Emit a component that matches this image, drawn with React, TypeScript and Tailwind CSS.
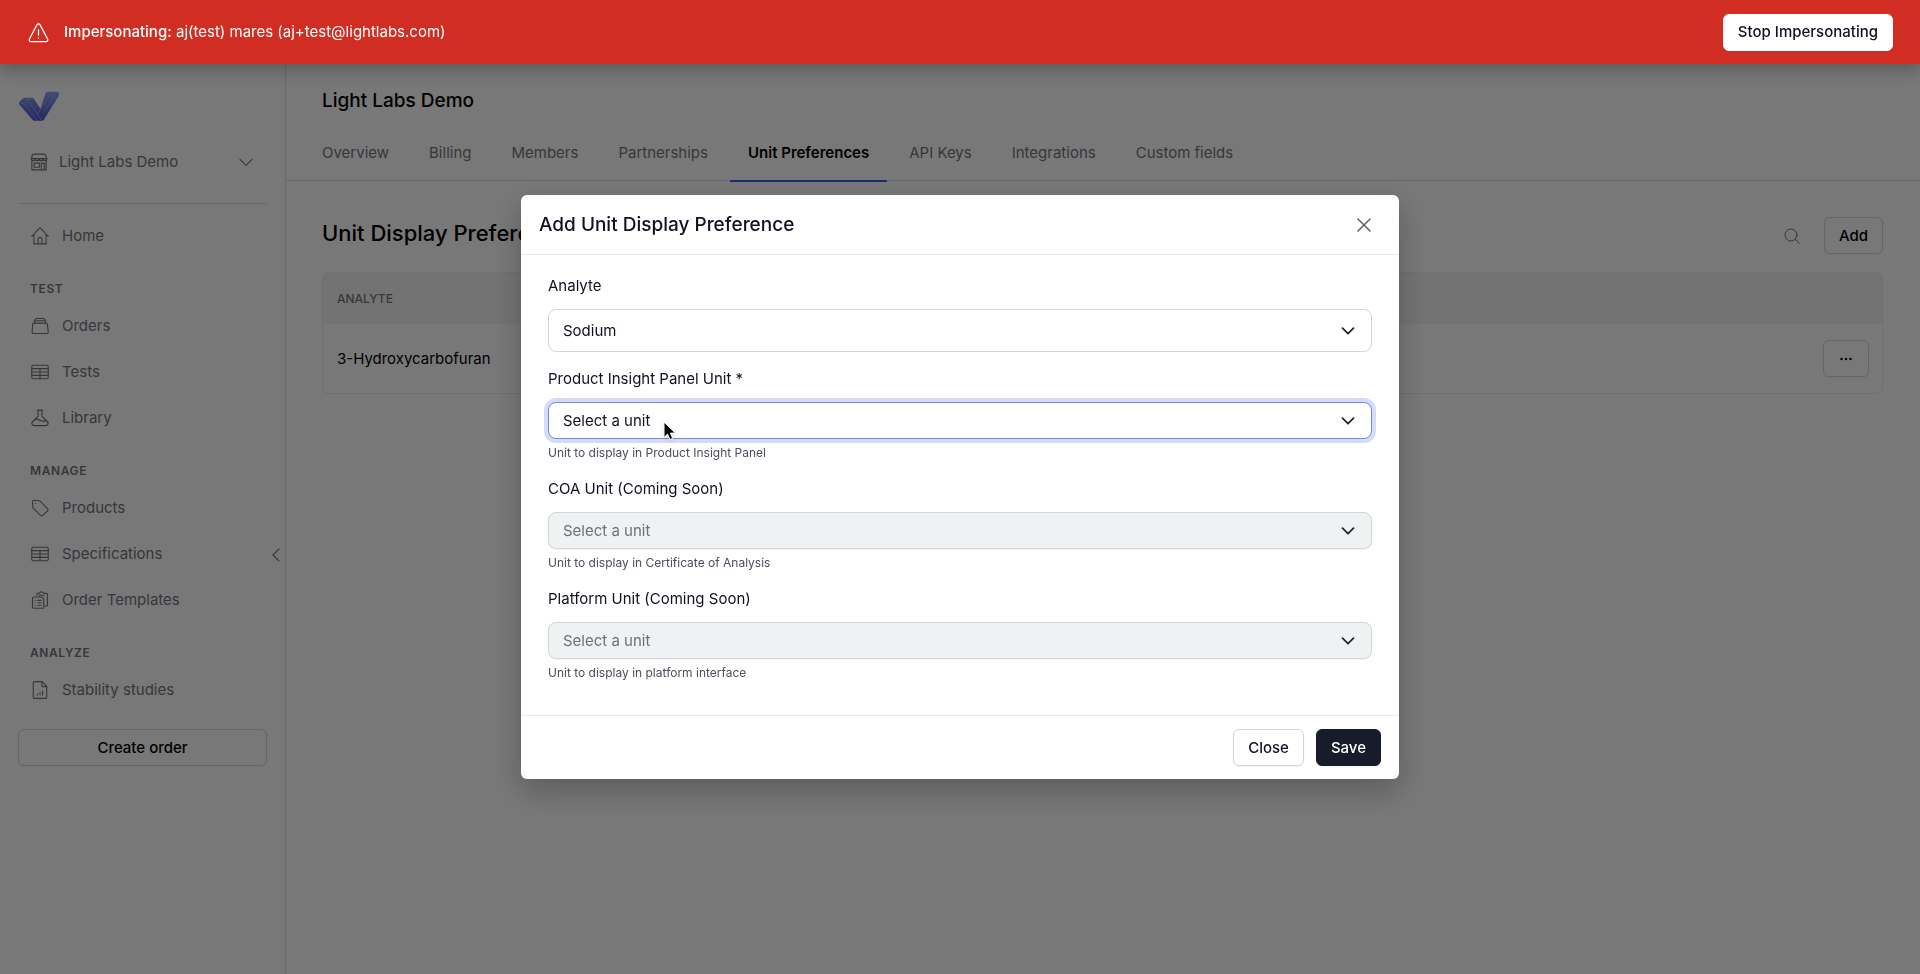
import { useState } from "react";
import type { ReactNode } from "react";
import { clsx } from "clsx";

type IconProps = { className?: string; children?: ReactNode };

function Icon({ className, children }: IconProps) {
  return (
    <svg
      viewBox="0 0 24 24"
      fill="none"
      stroke="currentColor"
      strokeWidth="1.5"
      strokeLinecap="round"
      strokeLinejoin="round"
      aria-hidden="true"
      className={clsx("shrink-0", className ?? "size-[18px]")}
    >
      {children}
    </svg>
  );
}

const StoreIcon = () => (
  <Icon>
    <path d="M2.500 7.500V5a3.500 3.500 0 0 1 3.500-3.500h12A3.500 3.500 0 0 1 21.500 5v2.500M1.500 7.500h21M1.500 7.500a2.600 2.600 0 0 0 5.200 0 2.600 2.600 0 0 0 5.300 0 2.600 2.600 0 0 0 5.300 0 2.600 2.600 0 0 0 5.200 0M2.500 10.500v12h19v-12M5.500 13.500h7v5.500h-7zM15 22.500v-9h4v9" />
  </Icon>
);

const HomeIcon = () => (
  <Icon>
    <path d="M.8 12.700 10.900 1.900a1.500 1.500 0 0 1 2.200 0l10.100 10.800M3.800 9.800v12.700h16.400V9.800M9.300 22.500v-6a2.700 2.700 0 0 1 5.400 0v6" />
  </Icon>
);

const OrdersIcon = () => (
  <Icon>
    <path d="M4 8.200h16c1 0 1.700.700 1.800 1.700L23 19.800a2 2 0 0 1-2 2.200H3.500a2 2 0 0 1-2-2.200l.700-9.900c.1-1 .8-1.700 1.800-1.700zM4.500 5h15M6.500 2h11M4.500 8.200V5l2-3M19.500 8.200V5l-2-3" />
  </Icon>
);

const TableIcon = () => (
  <Icon>
    <rect x="1" y="3" width="22" height="18" rx="2" />
    <path d="M1 7.500h22M1 12h22M1 16.500h22M12 7.500V21" />
  </Icon>
);

const FlaskIcon = () => (
  <Icon>
    <path d="M8.500 1.500h7M9.500 1.500v8L2.200 17c-2.200 2.300-.7 5.200 2.400 5.200h14.800c3.100 0 4.600-2.900 2.400-5.200L14.500 9.500v-8M5.500 14c3-.8 5 .2 7 1.200s4.500 1.300 7 .3" />
  </Icon>
);

const TagIcon = () => (
  <Icon>
    <path d="M2 3.500A1.800 1.800 0 0 1 3.800 1.700l7 .6c.7.1 1.300.4 1.800.9l9.300 9.500a2.200 2.200 0 0 1 0 3.100l-6.100 6a2.200 2.200 0 0 1-3.100 0L3.300 12.400a2.700 2.700 0 0 1-.8-1.700z" />
    <path d="M6 6h.1" />
  </Icon>
);

const ClipboardsIcon = () => (
  <Icon>
    <path d="M8 5.500V4.700A1.500 1.500 0 0 1 9.500 3.200H11a3.200 3.200 0 0 1 6 0h3.500A1.500 1.500 0 0 1 22 4.700v13.800a1.500 1.500 0 0 1-1.500 1.500H18M10.500 5.700h7" />
    <path d="M2 9.500A1.500 1.500 0 0 1 3.500 8h11L17 10.500v11a1.500 1.500 0 0 1-1.500 1.500h-12A1.500 1.500 0 0 1 2 21.500zM9 12.500h4.500M9 15.700h4.500M9 19h4.500M5.700 12.500h.1M5.700 15.700h.1M5.700 19h.1" />
  </Icon>
);

const ReportIcon = () => (
  <Icon>
    <path d="M3 2.500A1.700 1.700 0 0 1 4.700.8h10.100L21 7v14.500a1.700 1.700 0 0 1-1.700 1.700H4.700A1.700 1.700 0 0 1 3 21.500zM14.500 1v5a1.500 1.500 0 0 0 1.500 1.500h5M8.500 18.500v-1M12 18.500v-3M15.500 18.500v-5" />
  </Icon>
);

const ChevronDown = ({ className }: { className?: string }) => (
  <Icon className={className}>
    <path d="m4 8.500 8 8 8-8" />
  </Icon>
);

function Logo() {
  return (
    <svg viewBox="0 0 125 90" className="h-[30px] w-[42px]" aria-hidden="true">
      <defs>
        <linearGradient id="mark" x1="0" y1="0" x2="0" y2="1">
          <stop offset="0" stopColor="#8c9ff0" />
          <stop offset="1" stopColor="#4a58d4" />
        </linearGradient>
      </defs>
      <path
        d="M3 33 15 22q2-2 5-2h22q3 0 5 3l20 30L83 5q2-3 6-3h26q10 0 7 12L77 86q-2 3-5 3H48q-3 0-5-3L4 41q-3-4-1-8z"
        fill="url(#mark)"
      />
      <path
        d="M4 35 17 38 28 27l16-4M17 38l40 50M28 27l43 61M67 55 100 4M67 55l-7 12M76 64l38-58"
        fill="none"
        stroke="#c3cdfb"
        strokeWidth="2"
        opacity=".7"
      />
    </svg>
  );
}

type NavItem = { label: string; icon: ReactNode };

const sections: { title: string | null; items: NavItem[] }[] = [
  { title: null, items: [{ label: "Home", icon: <HomeIcon /> }] },
  {
    title: "Test",
    items: [
      { label: "Orders", icon: <OrdersIcon /> },
      { label: "Tests", icon: <TableIcon /> },
      { label: "Library", icon: <FlaskIcon /> },
    ],
  },
  {
    title: "Manage",
    items: [
      { label: "Products", icon: <TagIcon /> },
      { label: "Specifications", icon: <TableIcon /> },
      { label: "Order Templates", icon: <ClipboardsIcon /> },
    ],
  },
  { title: "Analyze", items: [{ label: "Stability studies", icon: <ReportIcon /> }] },
];

const tabs = [
  "Overview",
  "Billing",
  "Members",
  "Partnerships",
  "Unit Preferences",
  "API Keys",
  "Integrations",
  "Custom fields",
];

const buttonBase = "flex h-[37px] items-center justify-center rounded-md border px-[14px] font-medium shadow-xs";

function Banner() {
  return (
    <header className="relative z-30 flex h-16 items-center bg-[#d12d22] pr-[27px] pl-7 text-white shadow-[0_6px_16px_rgba(0,0,0,0.25)]">
      <Icon className="size-[21px]">
        <path d="M10.300 3.200 1.600 19.500A2 2 0 0 0 3.300 22.500h17.400a2 2 0 0 0 1.700-3L13.700 3.200a1.950 1.950 0 0 0-3.400 0zM12 9v6M12 18.300v.1" />
      </Icon>
      <p className="ml-[15px]">
        <strong className="font-medium">Impersonating:</strong> aj(test) mares (aj+test@lightlabs.com)
      </p>
      <button type="button" className={clsx(buttonBase, "ml-auto border-white bg-white text-[#0f1222]")}>
        Stop Impersonating
      </button>
    </header>
  );
}

function Sidebar() {
  return (
    <aside className="relative w-[286px] shrink-0 border-r border-[#e2e2e2] px-[18px] pt-[27px] text-[#74767e]">
      <Logo />
      <button type="button" className="mt-[18px] flex h-[46px] w-full items-center pr-3 pl-3">
        <StoreIcon />
        <span className="ml-[11px]">Light Labs Demo</span>
        <ChevronDown className="ml-auto size-[18px]" />
      </button>
      <div className="mt-[18px] mb-[9px] h-px bg-[#e2e2e2]" />
      <nav>
        {sections.map((section) => (
          <div key={section.title ?? "main"}>
            {section.title && (
              <h2 className="px-3 pt-[22px] pb-[6px] text-xs leading-4 font-semibold tracking-wider uppercase">
                {section.title}
              </h2>
            )}
            {section.items.map((item) => (
              <a key={item.label} href="#" className="flex h-[46px] items-center gap-[13px] pl-[13px]">
                {item.icon}
                {item.label}
              </a>
            ))}
          </div>
        ))}
      </nav>
      <button type="button" className={clsx(buttonBase, "mt-4 w-full border-[#d6d6d6] text-black")}>
        Create order
      </button>
      <button type="button" aria-label="Collapse sidebar" className="absolute top-[482px] right-0">
        <Icon className="size-[18px]">
          <path d="m16 4-8 8 8 8" />
        </Icon>
      </button>
    </aside>
  );
}

function Content() {
  return (
    <main className="min-w-0 flex-1">
      <div className="border-b border-[#e2e2e2] px-[18px] pt-[22px]">
        <h1 className="px-[18px] text-[19px] leading-[30px] font-medium">Light Labs Demo</h1>
        <nav className="mt-[9px] -mb-[2px] flex gap-1 text-[#74767e]">
          {tabs.map((tab) => (
            <a
              key={tab}
              href="#"
              className={clsx(
                "border-b-2 px-[18px] pt-4 pb-[15px]",
                tab === "Unit Preferences" ? "border-[#3560ee] font-semibold text-black" : "border-transparent"
              )}
            >
              {tab}
            </a>
          ))}
        </nav>
      </div>

      <section className="pr-[37px] pl-9">
        <div className="flex items-start pt-9 pb-[18px]">
          <h2 className="text-[22px] leading-8 font-medium">Unit Display Preferences</h2>
          <button type="button" aria-label="Search" className="mr-6 ml-auto self-center text-[#74767e]">
            <Icon className="size-[16px]">
              <circle cx="10.500" cy="10.500" r="9" />
              <path d="m17 17 6 6" />
            </Icon>
          </button>
          <button type="button" className={clsx(buttonBase, "border-[#d6d6d6]")}>
            Add
          </button>
        </div>
        <div className="overflow-hidden rounded-md border border-[#ededed]">
          <table className="w-full">
            <thead className="bg-[#f5f5f5]">
              <tr className="h-[51px]">
                <th className="px-[14px] text-left text-xs font-medium text-[#74767e] uppercase">Analyte</th>
                <th aria-label="Actions" />
              </tr>
            </thead>
            <tbody>
              <tr className="h-[69px]">
                <td className="px-[14px]">3-Hydroxycarbofuran</td>
                <td className="px-[13px]">
                  <button
                    type="button"
                    aria-label="Row actions"
                    className={clsx(buttonBase, "ml-auto w-[46px] border-[#d6d6d6]")}
                  >
                    <svg viewBox="0 0 12 4" className="h-1 w-3 shrink-0" fill="currentColor" aria-hidden="true">
                      <circle cx="1.500" cy="2" r="1.250" />
                      <circle cx="6" cy="2" r="1.250" />
                      <circle cx="10.500" cy="2" r="1.250" />
                    </svg>
                  </button>
                </td>
              </tr>
            </tbody>
          </table>
        </div>
      </section>
    </main>
  );
}

interface UnitSelectProps {
  id: string;
  label: string;
  value: string;
  hint?: string;
  disabled?: boolean;
  autoFocus?: boolean;
  tall?: boolean;
}

function UnitSelect({ id, label, value, hint, disabled, autoFocus, tall }: UnitSelectProps) {
  return (
    <div>
      <label htmlFor={id} className="block leading-6">
        {label}
      </label>
      <div className="relative mt-[11px]">
        <select
          id={id}
          disabled={disabled}
          autoFocus={autoFocus}
          className={clsx(
            "block w-full appearance-none rounded-lg border border-[#d3d4d6] bg-white px-[14px] outline-none",
            "focus:border-[#6f8ae0] focus:ring-4 focus:ring-[#d6dcf8]",
            "disabled:bg-[#eff2f3] disabled:text-[#6d7079] disabled:opacity-100",
            tall ? "h-[43px]" : "h-[37px] shadow-xs"
          )}
        >
          <option>{value}</option>
        </select>
        <svg
          viewBox="0 0 14 8"
          className="pointer-events-none absolute top-1/2 right-[17px] h-2 w-[14px] -translate-y-1/2"
          fill="none"
          stroke="#26272b"
          strokeWidth="1.800"
          strokeLinecap="round"
          strokeLinejoin="round"
          aria-hidden="true"
        >
          <path d="m1.500 1.200 5.500 5.500 5.500-5.500" />
        </svg>
      </div>
      {hint && <p className="mt-1 text-xs leading-[19px] text-[#4b4f5c]">{hint}</p>}
    </div>
  );
}

function UnitDialog({ onClose }: { onClose: () => void }) {
  return (
    <div className="fixed inset-0 z-20 flex items-center justify-center bg-black/53">
      <form
        role="dialog"
        aria-modal="true"
        aria-labelledby="dialog-title"
        onSubmit={(e) => e.preventDefault()}
        className="w-full max-w-[878px] rounded-md bg-white text-[#0f1222] shadow-[0_12px_32px_rgba(0,0,0,0.25)]"
      >
        <div className="flex h-[60px] items-center justify-between border-b border-[#e8e8ea] pr-[26px] pl-[18px]">
          <h2 id="dialog-title" className="text-[19px] font-medium">
            Add Unit Display Preference
          </h2>
          <button type="button" aria-label="Close dialog" onClick={onClose} className="text-[#5f626e]">
            <Icon className="size-[18px]">
              <path d="M4 4l16 16M20 4 4 20" strokeWidth="2" />
            </Icon>
          </button>
        </div>
        <div className="flex flex-col gap-[15px] px-[27px] pt-[19px] pb-[33px]">
          <UnitSelect id="analyte" label="Analyte" value="Sodium" tall />
          <UnitSelect
            id="panel-unit"
            label="Product Insight Panel Unit *"
            value="Select a unit"
            hint="Unit to display in Product Insight Panel"
            autoFocus
          />
          <UnitSelect
            id="coa-unit"
            label="COA Unit (Coming Soon)"
            value="Select a unit"
            hint="Unit to display in Certificate of Analysis"
            disabled
          />
          <UnitSelect
            id="platform-unit"
            label="Platform Unit (Coming Soon)"
            value="Select a unit"
            hint="Unit to display in platform interface"
            disabled
          />
        </div>
        <div className="flex justify-end gap-3 border-t border-[#e8e8ea] px-[18px] py-[13px]">
          <button type="button" onClick={onClose} className={clsx(buttonBase, "border-[#d3d4d6] bg-white")}>
            Close
          </button>
          <button type="submit" className={clsx(buttonBase, "border-[#171b2a] bg-[#171b2a] text-white")}>
            Save
          </button>
        </div>
      </form>
    </div>
  );
}

function Pointer() {
  return (
    <svg
      viewBox="0 0 14 20"
      className="pointer-events-none fixed top-[421px] left-[663px] z-40 h-5 w-[14px] drop-shadow-sm"
      aria-hidden="true"
    >
      <path
        d="M1 1v15.500l3.600-3.400 2.300 5.500 2.800-1.200-2.300-5.300h5z"
        fill="#000"
        stroke="#fff"
        strokeWidth="1"
      />
    </svg>
  );
}

export default function App() {
  const [open, setOpen] = useState(true);

  return (
    <div className="flex min-h-screen flex-col bg-white font-[Inter,'Liberation_Sans',sans-serif] text-[15px] leading-6 text-black">
      <Banner />
      <div className="flex flex-1">
        <Sidebar />
        <Content />
      </div>
      {open && <UnitDialog onClose={() => setOpen(false)} />}
      <Pointer />
    </div>
  );
}
